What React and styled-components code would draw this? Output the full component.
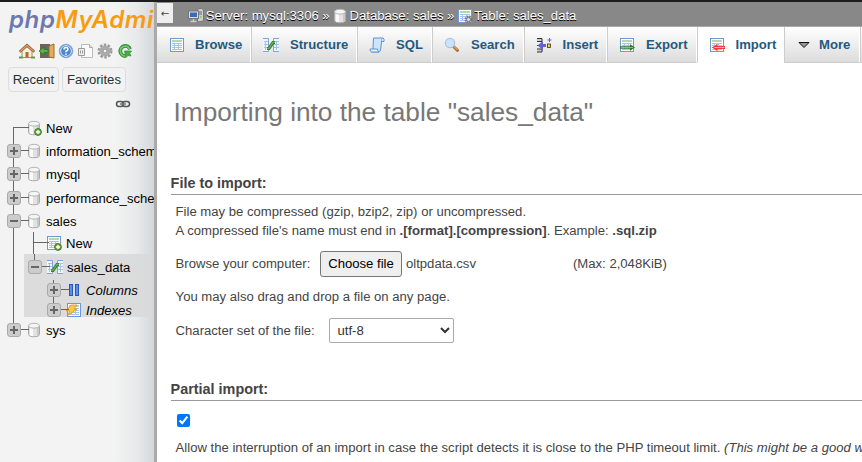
import React from 'react';
import styled, { createGlobalStyle, css } from 'styled-components';

const GlobalStyle = createGlobalStyle`
  * { box-sizing: border-box; }
  body {
    margin: 0;
    background: #fff;
    color: #444;
    font: 13.12px "Liberation Sans", Arial, sans-serif;
    overflow: hidden;
  }
`;

/* ---------- layout ---------- */
const Page = styled.div`
  display: flex;
  width: 862px;
  height: 462px;
  border-top: 2px solid #1c1c1c;
  overflow: hidden;
`;
const Sidebar = styled.nav`
  flex: 0 0 154px;
  overflow: hidden;
  white-space: nowrap;
  color: #000;
  background: linear-gradient(to right, #f3f3f3 0, #f3f3f3 114px, #e8eaeb 136px, #d4d8db 154px);
`;
const Resizer = styled.div`
  flex: 0 0 3px;
  background: #aaa;
`;
const Main = styled.main`
  flex: 1;
  min-width: 0;
  overflow: hidden;
  white-space: nowrap;
`;

/* ---------- sidebar ---------- */
const Logo = styled.div`
  height: 39px;
  padding: 3px 0 0 9px;
  font: italic 600 24px/30px Inter, sans-serif;
  letter-spacing: 0.6px;
  color: #f89c0e;
`;
const LogoPhp = styled.span`
  color: #6c78af;
`;
const IconBar = styled.div`
  display: flex;
  gap: 3.6px;
  padding-left: 19px;
  height: 26px;
  padding-top: 2px;
`;
const QuickLinks = styled.div`
  display: flex;
  gap: 3px;
  padding-left: 8px;
`;
const QuickLink = styled.button`
  width: ${(p) => p.$width}px;
  height: 25px;
  padding: 0;
  border: 1px solid #ddd;
  border-radius: 4px;
  background: #f2f2f2;
  color: #233;
  font: 13.12px "Liberation Sans", Arial, sans-serif;
`;
const LinkToggle = styled.div`
  height: 24px;
  padding: 4px 0 0 115px;
`;
const Icon = styled.svg`
  display: block;
  flex: none;
  width: 16px;
  height: 16px;
`;

const TreeRow = styled.div`
  display: flex;
  align-items: center;
  height: ${(p) => p.$height}px;
  padding-left: ${(p) => p.$inset ?? 3}px;
  font-style: ${(p) => (p.$italic ? 'italic' : 'normal')};
`;
const TreeLabel = styled.span`
  padding: 1px 0 0 4px;
`;
const ActiveBranch = styled.div`
  display: flex;
  height: 63px;
`;
const BranchRail = styled.div`
  flex: 0 0 24px;
  padding-left: 13px;
  &::before {
    content: '';
    display: block;
    width: 1px;
    height: 63px;
    background: #666;
  }
`;
const BranchBody = styled.div`
  width: 129px;
  background: linear-gradient(to right, #dcdcdc 80%, #d9dadb 97%, transparent);
`;
const vertical = {
  none: 'transparent',
  full: '#666',
  down: 'linear-gradient(transparent 50%, #666 50%)',
  up: 'linear-gradient(#666 50%, transparent 50%)',
};
const Guide = styled.span`
  display: flex;
  align-items: center;
  justify-content: center;
  position: relative;
  flex: 0 0 21px;
  height: 100%;
  margin-right: ${(p) => (p.$dash ? 2 : -1)}px;
  &::before {
    content: '';
    position: absolute;
    left: 10px;
    top: 0;
    bottom: 0;
    width: 1px;
    background: ${(p) => vertical[p.$line]};
  }
  ${(p) =>
    p.$dash &&
    css`
      &::after {
        content: '';
        position: absolute;
        left: 10px;
        top: calc(50% - 1px);
        width: ${p.$dash}px;
        height: 1px;
        background: #666;
      }
    `}
`;
const Toggle = styled.svg`
  position: relative;
  z-index: 1;
  width: 14px;
  height: 14px;
  margin-left: 1px;
  flex: none;
`;

/* ---------- top bars ---------- */
const Breadcrumb = styled.header`
  display: flex;
  height: 24px;
  background: #888;
  color: #fff;
  text-shadow: 0 1px 0 #000;
`;
const Collapse = styled.button`
  width: 16px;
  height: 20px;
  margin: 1px 15px 0 0;
  padding: 0;
  border: 0;
  background: #eee;
  color: #444;
  font: 10px "DejaVu Sans", sans-serif;
`;
const Crumb = styled.span`
  display: flex;
  align-items: center;
  gap: 1.8px;
  height: 27px;
`;
const Separator = styled.span`
  width: 13px;
  padding-left: 3.5px;
  line-height: 27px;
`;
const Tabs = styled.div`
  display: flex;
  height: 37px;
  border-top: 1px solid #aaa;
`;
const Tab = styled.a`
  display: flex;
  align-items: center;
  flex: 0 0 ${(p) => p.$width}px;
  padding-left: ${(p) => (p.$first ? 12 : 11)}px;
  border-left: ${(p) => (p.$first ? 0 : 1)}px solid #ccc;
  border-right: 1px solid #fff;
  border-bottom: 1px solid ${(p) => (p.$active ? '#fff' : '#ccc')};
  background: ${(p) => (p.$active ? '#fff' : 'linear-gradient(#fff, #dcdcdc)')};
  color: #235a81;
  font-weight: bold;
`;
const TabLabel = styled.span`
  padding-left: ${(p) => p.$gap}px;
`;

/* ---------- content ---------- */
const Title = styled.h2`
  margin: 0;
  padding: 33px 0 0 16.5px;
  height: 110px;
  color: #777;
  font-weight: normal;
  font-size: 26.24px;
  line-height: 32px;
`;
const SectionTitle = styled.h3`
  margin: 0 0 0 13.6px;
  height: 22px;
  border-bottom: 1px solid #999;
  font-size: 14.4px;
  line-height: 20px;
`;
const SectionBody = styled.section`
  padding-left: 18.6px;
`;
const Text = styled.p`
  margin: 0;
  height: ${(p) => p.$height}px;
  line-height: ${(p) => p.$height}px;
`;
const Field = styled.div`
  display: flex;
  align-items: center;
  height: ${(p) => p.$height}px;
  margin-bottom: ${(p) => p.$after || 0}px;
`;
const FieldLabel = styled.label`
  width: ${(p) => p.$width}px;
`;
const FileLabel = styled(FieldLabel)`
  padding-bottom: 1px;
`;
const FileButton = styled.button`
  width: 82px;
  height: 26px;
  margin-right: 4px;
  padding: 0 0 1px;
  border: 1px solid #767676;
  border-radius: 3px;
  background: #efefef;
  color: #000;
  font: 13.12px "Liberation Sans", Arial, sans-serif;
`;
const FileName = styled.span`
  width: 167px;
  padding-bottom: 1px;
`;
const SizeLimit = styled.span`
  padding-bottom: 1px;
`;
const Select = styled.select`
  width: 125px;
  height: 25px;
  padding: 0 3.5px;
  border: 1px solid #aaa;
  border-radius: 2px;
  background: #fff;
  color: #333;
  font: 13.12px "Liberation Sans", Arial, sans-serif;
`;
const Check = styled.input`
  width: 13px;
  height: 13px;
  margin: 0 0 0 1.4px;
`;

/* ---------- icons ---------- */
const TableSheet = () => (
  <>
    <rect x="1.5" y="1.5" width="13" height="13" fill="#fff" stroke="#6c9ad4" />
    <path d="M3 4h10" stroke="#a5cc98" strokeWidth="1.6" />
    <path d="M3 6.5h10M3 8.5h10M3 10.5h10M3 12.5h10M5.5 6v7M9.5 6v7" stroke="#a9c3e6" />
  </>
);
const DbShape = () => (
  <>
    <path d="M2.5 4v8.5c0 3 11 3 11 0V4z" fill="#e2e2e2" stroke="#aaa" />
    <path d="M4 5v8.5c1 .5 2 .7 3 .7V5z" fill="#fafafa" />
    <path d="M11 5v9l2-1V5z" fill="#c8c8c8" />
    <ellipse cx="8" cy="3.7" rx="5.5" ry="2.4" fill="#f5f5f5" stroke="#b5b5b5" />
  </>
);
const PlusBadge = () => (
  <>
    <circle cx="12" cy="12" r="3.4" fill="#73a84b" stroke="#3e7b27" />
    <path d="M10 12h4M12 10v4" stroke="#fff" strokeWidth="1.3" />
  </>
);
const icons = {
  db: <DbShape />,
  dbNew: <><DbShape /><PlusBadge /></>,
  table: <TableSheet />,
  tableNew: <><TableSheet /><PlusBadge /></>,
  tableGear: (
    <>
      <TableSheet />
      <circle cx="11.5" cy="11.5" r="3" fill="#ccc" stroke="#777" strokeWidth="2" strokeDasharray="1.6 .8" />
      <circle cx="11.5" cy="11.5" r="2" fill="#ddd" stroke="#777" />
    </>
  ),
  structure: (
    <>
      <path d="M0 1.5h5.5v13H0M16 1.5h-5.5v13H16" fill="#eef5ff" stroke="#7fa5d8" />
      <path d="M1 4.5h4M11 4.5h5M1 7.5h4M11 7.5h5M1 10.5h4M11 10.5h5M2.5 5v8M13.5 5v8" stroke="#a4c1e6" />
      <path d="M4 11.5h2l4-6h2" fill="none" stroke="#347e32" strokeWidth="3.2" />
      <path d="M4 11.3h2l4-6h2" fill="none" stroke="#67b35a" strokeWidth="1.2" />
    </>
  ),
  columns: (
    <>
      <rect x="3.5" y="2.5" width="3" height="11" fill="#5b8fe8" stroke="#2458bd" />
      <rect x="9.5" y="2.5" width="3" height="11" fill="#5b8fe8" stroke="#2458bd" />
    </>
  ),
  index: (
    <>
      <TableSheet />
      <path d="M5 3h6L8 7h3L1 14l3-5H0z" fill="#fbc944" stroke="#d8932a" strokeWidth=".8" />
    </>
  ),
  sql: (
    <>
      <path d="M4.500 1h9.500q-1.500 1-1.500 4l-1 8q-.5 2-2 2H2.500q1.500-1 1.500-3z" fill="#cde5fc" stroke="#5e93cf" />
      <path d="M1 12h7.500q0 2 1.500 3H3q-2 0-2-3zM12.500 4.500H15q.5-3-1-3.500" fill="#eaf5ff" stroke="#5e93cf" />
    </>
  ),
  search: (
    <>
      <path d="M9.500 9.500l4 3.800" stroke="#a86b35" strokeWidth="3" strokeLinecap="round" />
      <path d="M10 9.500l3.500 3.200" stroke="#e0a35d" strokeWidth="1.200" />
      <circle cx="6" cy="6" r="4.600" fill="#cbe4fb" stroke="#a7c6ea" strokeWidth="1.300" />
    </>
  ),
  insert: (
    <>
      <path d="M1 1.500h5v3H1M1 15h5v-3H1M1 8.500h2" fill="#ccc" stroke="#333" />
      <path d="M1.500 8.500L7 4v3h3v3H7v3z" fill="#6262d4" />
      <rect x="11.500" y="7" width="3" height="3.500" fill="#fc3" stroke="#333" strokeWidth=".8" />
      <path d="M13.500 1v4M11.500 3h4" stroke="#6262d4" />
    </>
  ),
  export: (
    <>
      <TableSheet />
      <path d="M1 9.200h10V7.200l5 3.300-5 3.300v-2H1z" fill="#297a28" />
      <path d="M2 10.500h12" stroke="#83c274" />
    </>
  ),
  import: (
    <>
      <TableSheet />
      <path d="M16.500 9H8.500V6.800L3 10.500l5.500 3.700V12h8z" fill="#f13b3b" />
      <path d="M5.500 10.500h10" stroke="#ffb0a9" />
    </>
  ),
  more: <path d="M3 5.500h10L8 10.500z" fill="#999" stroke="#111" />,
  server: (
    <>
      <path d="M9.500 1l4-.500 2 1.500v11l-6 1z" fill="#cfcfcf" stroke="#777" />
      <path d="M11 4h3M11 6h3" stroke="#666" />
      <circle cx="12.800" cy="9" r=".8" fill="#5fbd43" />
      <rect x=".5" y="3" width="10" height="7.500" fill="#dedede" stroke="#777" />
      <rect x="2" y="4.500" width="7" height="4.500" fill="#386bb8" />
      <path d="M5.500 11v2M2.500 13.500h6" stroke="#ccc" strokeWidth="1.500" />
    </>
  ),
  home: (
    <>
      <path d="M3 8v6.500h10V8L8 3.500z" fill="#fbf0dc" stroke="#b48a58" />
      <path d="M.8 8.800L8 2.300l7.200 6.500" fill="none" stroke="#8f542c" strokeWidth="2.600" />
      <path d="M1.300 8.500L8 2.300l6.700 6.200" fill="none" stroke="#dba36b" strokeWidth="1.300" />
      <rect x="6.500" y="9" width="3" height="5.500" fill="#a66c3b" />
      <path d="M0 14.500h4M12 14.500h4" stroke="#55a63d" strokeWidth="2" />
    </>
  ),
  logout: (
    <>
      <rect x="1.500" y="1.500" width="9" height="13" fill="#666" stroke="#765f42" />
      <path d="M10 3l5-2v14l-5-1z" fill="#e2ae5b" stroke="#9c6c2a" />
      <path d="M0 8l5-4v2.500h4v3H5V12z" fill="#54b548" stroke="#237923" strokeWidth=".8" />
    </>
  ),
  help: (
    <>
      <circle cx="8" cy="8" r="6.800" fill="#4f87cb" stroke="#83a9dc" />
      <circle cx="8" cy="8" r="5.400" fill="none" stroke="#dfeaf8" />
      <path d="M6 6.500q0-2 2-2t2 1.800q0 1.200-2 2v1M8 10.500v1.500" fill="none" stroke="#fff" strokeWidth="1.500" />
    </>
  ),
  docs: (
    <>
      <path d="M3.500 1.500h8l3 3v10h-11z" fill="#fafafa" stroke="#bbb" />
      <path d="M11.500 1.500v3h3" fill="#ddd" stroke="#aaa" />
      <path d="M.5 5.500h6v7h-6zM2.500 7.500v3M4.500 7.500v3" fill="#eee" stroke="#999" />
    </>
  ),
  gear: (
    <>
      <circle cx="8" cy="8" r="6.200" fill="none" stroke="#999" strokeWidth="2.600" strokeDasharray="2.400 1.496" />
      <circle cx="8" cy="8" r="4" fill="#ddd" stroke="#aaa" strokeWidth="3" />
      <circle cx="8" cy="8" r="2" fill="#f3f3f3" stroke="#888" />
    </>
  ),
  reload: (
    <>
      <path d="M13 6.200A5 5 0 1 0 8.500 13" fill="none" stroke="#2f8b34" strokeWidth="3.800" />
      <path d="M12.600 6A4.800 4.800 0 1 0 8.500 12.800" fill="none" stroke="#78c66c" strokeWidth="1.800" />
      <path d="M7.500 8h7l-1.800 2.200 1.300 2.800-3-.5L9 14.500z" fill="#4bab48" stroke="#2f8b34" strokeWidth=".7" />
    </>
  ),
  link: (
    <>
      <rect x="1.500" y="5.500" width="7" height="5" rx="2.500" fill="none" stroke="#555" strokeWidth="1.500" />
      <rect x="7.500" y="5.500" width="7" height="5" rx="2.500" fill="none" stroke="#555" strokeWidth="1.500" />
      <path d="M5 8h6" stroke="#777" strokeWidth="1.500" />
    </>
  ),
};
const Glyph = ({ name }) => (
  <Icon viewBox="0 0 16 16" aria-hidden="true">{icons[name]}</Icon>
);
const Expander = ({ open }) => (
  <Toggle viewBox="0 0 14 14">
    <rect x=".5" y=".5" width="13" height="13" rx="2.500" fill="#ccc" stroke="#aaa" />
    <path d={open ? 'M3 7h8' : 'M3 7h8M7 3v8'} stroke="#666" strokeWidth="2" />
  </Toggle>
);

const Node = ({ icon, label, height, line = 'full', dash = 16, toggle, italic, inset, before }) => (
  <TreeRow $height={height} $italic={italic} $inset={inset}>
    {before && <Guide $line={before} />}
    <Guide $line={line} $dash={dash}>
      {toggle && <Expander open={toggle === 'open'} />}
    </Guide>
    <Glyph name={icon} />
    <TreeLabel>{label}</TreeLabel>
  </TreeRow>
);

const tabs = [
  ['Browse', 'table', 94, 10],
  ['Structure', 'structure', 106, 11],
  ['SQL', 'sql', 75, 11],
  ['Search', 'search', 92, 11],
  ['Insert', 'insert', 83, 10.5],
  ['Export', 'export', 90, 11],
  ['Import', 'import', 87, 10.5],
  ['More', 'more', 76, 7],
  ['', null, 20, 0],
];

export default function App() {
  return (
    <>
      <GlobalStyle />
      <Page>
        <Sidebar>
          <Logo><LogoPhp>php</LogoPhp>MyAdmin</Logo>
          <IconBar>
            {['home', 'logout', 'help', 'docs', 'gear', 'reload'].map((n) => <Glyph key={n} name={n} />)}
          </IconBar>
          <QuickLinks>
            <QuickLink $width={51}>Recent</QuickLink>
            <QuickLink $width={64}>Favorites</QuickLink>
          </QuickLinks>
          <LinkToggle><Glyph name="link" /></LinkToggle>
          <Node icon="dbNew" label="New" height={23} line="down" />
          <Node icon="db" label="information_schema" height={23} toggle="closed" />
          <Node icon="db" label="mysql" height={24} toggle="closed" />
          <Node icon="db" label="performance_schema" height={23} toggle="closed" />
          <Node icon="db" label="sales" height={23} toggle="open" />
          <Node icon="tableNew" label="New" height={22} before="full" />
          <ActiveBranch>
            <BranchRail />
            <BranchBody>
              <Node icon="structure" label="sales_data" height={26} inset={-1} line="up" toggle="open" />
              <Node icon="columns" label="Columns" height={20} inset={19} italic toggle="closed" />
              <Node icon="index" label="Indexes" height={20} inset={19} italic line="up" toggle="closed" />
            </BranchBody>
          </ActiveBranch>
          <Node icon="db" label="sys" height={26} line="up" toggle="closed" />
        </Sidebar>
        <Resizer />
        <Main>
          <Breadcrumb>
            <Collapse>←</Collapse>
            <Crumb><Glyph name="server" />Server: mysql:3306</Crumb>
            <Separator>»</Separator>
            <Crumb><Glyph name="db" />Database: sales</Crumb>
            <Separator>»</Separator>
            <Crumb><Glyph name="tableGear" />Table: sales_data</Crumb>
          </Breadcrumb>
          <Tabs>
            {tabs.map(([label, icon, width, gap], i) => (
              <Tab key={width} $width={width} $first={i === 0} $active={label === 'Import'}>
                {icon && <Glyph name={icon} />}
                <TabLabel $gap={gap}>{label}</TabLabel>
              </Tab>
            ))}
          </Tabs>
          <Title>Importing into the table "sales_data"</Title>
          <SectionTitle>File to import:</SectionTitle>
          <SectionBody>
            <Text $height={34}>File may be compressed (gzip, bzip2, zip) or uncompressed.</Text>
            <Text $height={4}>
              A compressed file's name must end in <b>.[format].[compression]</b>. Example: <b>.sql.zip</b>
            </Text>
            <Field $height={62}>
              <FileLabel $width={144.4}>Browse your computer:</FileLabel>
              <FileButton>Choose file</FileButton>
              <FileName>oltpdata.csv</FileName>
              <SizeLimit>(Max: 2,048KiB)</SizeLimit>
            </Field>
            <Text $height={4}>You may also drag and drop a file on any page.</Text>
            <Field $height={63} $after={17}>
              <FieldLabel $width={153.4}>Character set of the file:</FieldLabel>
              <Select defaultValue="utf-8"><option>utf-8</option></Select>
            </Field>
          </SectionBody>
          <SectionTitle>Partial import:</SectionTitle>
          <SectionBody>
            <Field $height={39}><Check type="checkbox" defaultChecked /></Field>
            <Text $height={16}>
              Allow the interruption of an import in case the script detects it is close to the PHP timeout limit.{' '}
              <i>(This might be a good way to import large files.)</i>
            </Text>
          </SectionBody>
        </Main>
      </Page>
    </>
  );
}
